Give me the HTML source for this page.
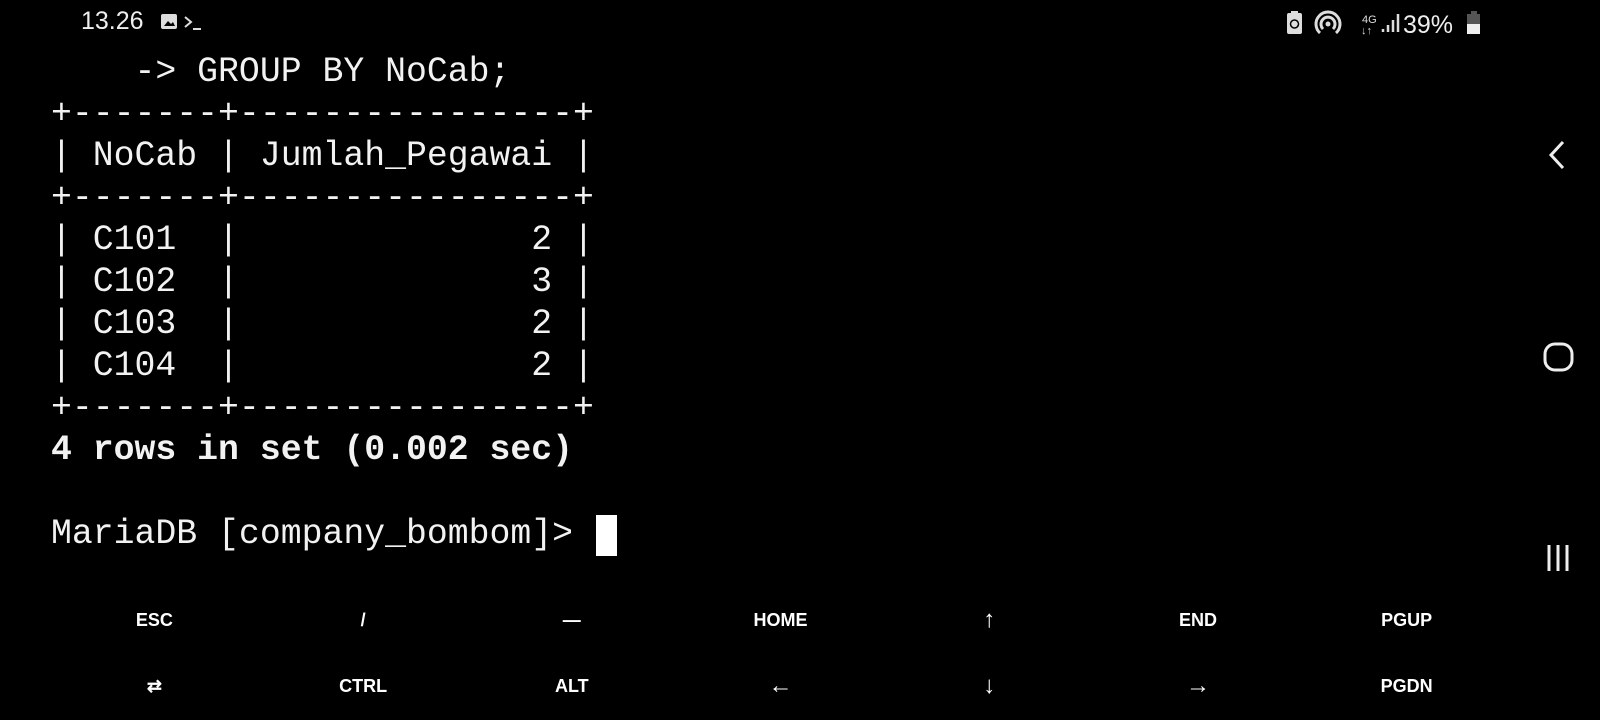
<!DOCTYPE html>
<html><head><meta charset="utf-8"><style>
html,body{margin:0;padding:0;background:#000;width:1600px;height:720px;overflow:hidden;color:#fff}
.term{position:absolute;left:51px;top:52px;font-family:"Liberation Mono","DejaVu Sans Mono",monospace;font-size:34.8px;line-height:42px;white-space:pre;color:#f2f2f2}
.b{font-weight:bold}
.cur{position:absolute;left:596px;top:515px;width:21px;height:41px;background:#fff}
.sb{position:absolute;font-family:"Liberation Sans",sans-serif;color:#eee}
.keys{position:absolute;left:50px;width:1461px;display:flex;font-family:"Liberation Sans",sans-serif;font-weight:bold;font-size:18px;color:#fff}
.keys div{flex:1;text-align:center}
.keys .ar{font-size:24px;font-weight:normal;line-height:20px}
</style></head><body>
<div class="sb" style="left:81px;top:7px;font-size:25px;">13.26</div>
<svg class="sb" style="left:160px;top:12px" width="60" height="20"><rect x="1" y="2" width="16" height="15" rx="2" fill="#ddd"/><path d="M4 14 L8 9 L11 12 L13 10 L15 14Z" fill="#000"/><path d="M25 5 L31 10 L25 15" stroke="#ddd" stroke-width="2" fill="none"/><path d="M33 17 H41" stroke="#ddd" stroke-width="2"/></svg>
<svg class="sb" style="left:1280px;top:8px" width="200" height="28">
<rect x="7" y="5" width="15" height="21" rx="2" fill="#ddd"/><rect x="11" y="3" width="7" height="3" fill="#ddd"/><circle cx="14.5" cy="16" r="4" fill="none" stroke="#000" stroke-width="1.5"/>
<path d="M40 25 A12 12 0 1 1 56 25" fill="none" stroke="#ddd" stroke-width="3"/><path d="M43 21 A7 7 0 1 1 53 21" fill="none" stroke="#ddd" stroke-width="3"/><circle cx="48" cy="16" r="2.5" fill="#ddd"/>
<text x="82" y="15" font-family="Liberation Sans" font-size="11" fill="#ddd">4G</text><text x="81" y="26" font-family="Liberation Sans" font-size="11" fill="#ddd">↓↑</text>
<path d="M103 24V21M108 24V17M113 24V12M118 24V6" stroke="#ddd" stroke-width="2.5"/>
<text x="123" y="25" font-family="Liberation Sans" font-size="25" fill="#eee">39%</text>
<rect x="187" y="6" width="14" height="20" fill="#555"/><rect x="187" y="16" width="14" height="10" fill="#eee"/><rect x="191" y="3" width="6" height="3" fill="#555"/>
</svg>
<div class="term">    -&gt; GROUP BY NoCab;
+-------+----------------+
| NoCab | Jumlah_Pegawai |
+-------+----------------+
| C101  |              2 |
| C102  |              3 |
| C103  |              2 |
| C104  |              2 |
+-------+----------------+
<span class="b">4 rows in set (0.002 sec)</span>

MariaDB [company_bombom]&gt; </div>
<div class="cur"></div>
<svg style="position:absolute;left:1540px;top:138px" width="40" height="440">
<path d="M23 4 L11 17 L23 30" stroke="#eee" stroke-width="3" fill="none"/>
<rect x="5" y="206" width="27" height="26" rx="10" stroke="#eee" stroke-width="3" fill="none"/>
<path d="M9 407V433M18 407V433M27 407V433" stroke="#eee" stroke-width="3"/>
</svg>
<div class="keys" style="top:610px"><div>ESC</div><div>/</div><div>—</div><div>HOME</div><div class="ar">↑</div><div>END</div><div>PGUP</div></div>
<div class="keys" style="top:676px"><div>⇄</div><div>CTRL</div><div>ALT</div><div class="ar">←</div><div class="ar">↓</div><div class="ar">→</div><div>PGDN</div></div>
</body></html>
